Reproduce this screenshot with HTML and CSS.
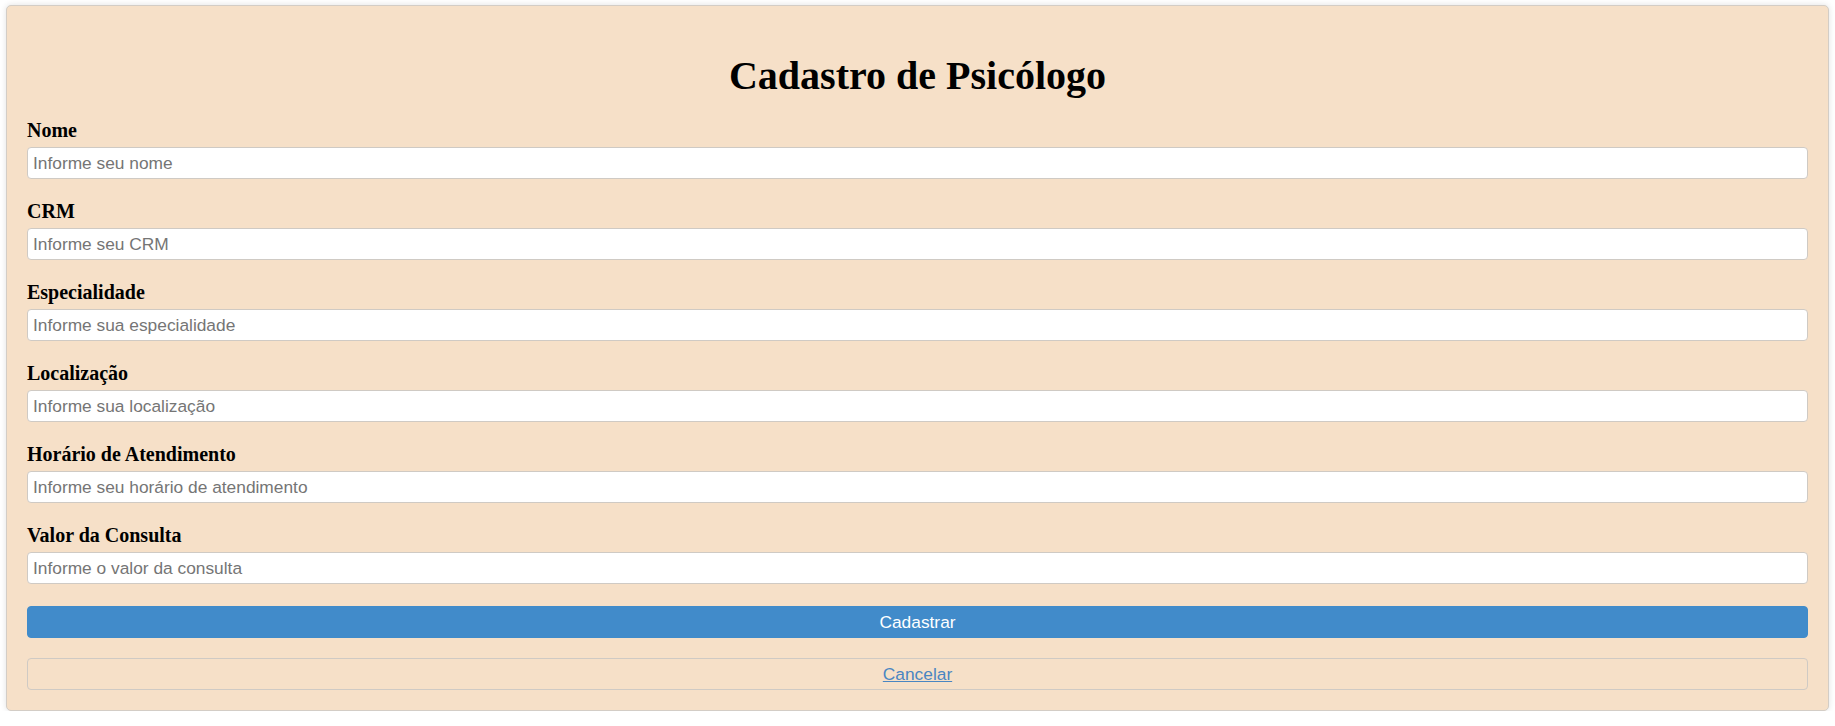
FILE: index.html
```html
<!DOCTYPE html>
<html lang="pt-BR">
<head>
<meta charset="utf-8">
<title>Cadastro de Psicólogo</title>
<link rel="stylesheet" href="styles.css">
</head>
<body>
<div class="card">
  <h1 class="title">Cadastro de Psicólogo</h1>
  <form class="form">
    <div class="field">
      <label class="label" for="nome">Nome</label>
      <input class="input" id="nome" type="text" placeholder="Informe seu nome">
    </div>
    <div class="field">
      <label class="label" for="crm">CRM</label>
      <input class="input" id="crm" type="text" placeholder="Informe seu CRM">
    </div>
    <div class="field">
      <label class="label" for="esp">Especialidade</label>
      <input class="input" id="esp" type="text" placeholder="Informe sua especialidade">
    </div>
    <div class="field">
      <label class="label" for="loc">Localização</label>
      <input class="input" id="loc" type="text" placeholder="Informe sua localização">
    </div>
    <div class="field">
      <label class="label" for="hor">Horário de Atendimento</label>
      <input class="input" id="hor" type="text" placeholder="Informe seu horário de atendimento">
    </div>
    <div class="field">
      <label class="label" for="val">Valor da Consulta</label>
      <input class="input" id="val" type="text" placeholder="Informe o valor da consulta">
    </div>
    <button class="btn-primary" type="button">Cadastrar</button>
    <div class="cancel-box"><a class="cancel-link" href="#">Cancelar</a></div>
  </form>
</div>
</body>
</html>
```

FILE: styles.css
```css
html, body {
  margin: 0;
  padding: 0;
  background: #ffffff;
}

body {
  padding: 5px 6px 0 6px;
  font-family: "Liberation Serif", "Times New Roman", serif;
}

.card {
  background: #f6e0c8;
  border: 1px solid #d3cdc6;
  border-radius: 5px;
  box-shadow: 0 0 6px rgba(0, 0, 0, 0.12);
  padding: 20px;
}

.title {
  margin: 27px 0 20px;
  font-size: 40px;
  font-weight: bold;
  text-align: center;
  line-height: 46px;
  color: #000;
}

.form {
  display: flex;
  flex-direction: column;
}

.field {
  display: flex;
  flex-direction: column;
  margin-bottom: 21px;
}

.label {
  font-size: 20px;
  font-weight: bold;
  line-height: 22px;
  margin-bottom: 6px;
  color: #000;
}

.input {
  box-sizing: border-box;
  height: 32px;
  padding: 0 5px;
  border: 1px solid #cfcac4;
  border-radius: 4px;
  background: #fff;
  font-family: "Liberation Sans", Arial, sans-serif;
  font-size: 17.33px;
  color: #333;
  outline: none;
}

.input::placeholder {
  color: #757575;
}

.btn-primary {
  box-sizing: border-box;
  height: 32px;
  margin-top: 1px;
  border: 1px solid #3f8bca;
  border-radius: 4px;
  background: #418bca;
  color: #fff;
  font-family: "Liberation Sans", Arial, sans-serif;
  font-size: 17.33px;
  cursor: pointer;
}

.cancel-box {
  box-sizing: border-box;
  height: 32px;
  margin-top: 20px;
  border: 1px solid #cfcac4;
  border-radius: 4px;
  display: flex;
  align-items: center;
  justify-content: center;
}

.cancel-link {
  color: #4a86c2;
  font-family: "Liberation Sans", Arial, sans-serif;
  font-size: 17.33px;
  text-decoration: underline;
}
```
